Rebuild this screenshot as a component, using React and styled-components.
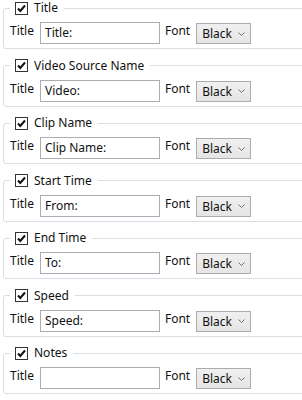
import React from 'react';
import styled, { createGlobalStyle } from 'styled-components';

const GlobalStyle = createGlobalStyle`
  html, body {
    margin: 0;
    padding: 0;
    background: #ffffff;
  }
  body {
    font-family: "Noto Sans", "Open Sans", sans-serif;
    font-size: 12px;
    color: #000;
  }
`;

const Page = styled.div`
  width: 302px;
  height: 400px;
  overflow: hidden;
  padding: 1px 0 0 3px;
  box-sizing: border-box;
`;

const Group = styled.fieldset`
  margin: 0 -30px 9.5px 0;
  padding: 7px 6px 4px 6px;
  border: 1px solid #d5dfe5;
  border-radius: 3px;
  min-width: 0;
`;

const Legend = styled.legend`
  display: flex;
  align-items: center;
  gap: 6px;
  height: 14px;
  padding: 0 6px 0 5px;
  font-size: 12px;
  line-height: 14px;
  color: #111;
`;

const Check = styled.span`
  display: flex;
  width: 13px;
  height: 13px;
`;

const Row = styled.div`
  display: flex;
  align-items: center;
  height: 22px;
`;

const Label = styled.span`
  font-size: 12px;
  line-height: 14px;
  margin-right: ${p => p.$gap}px;
  color: #111;
  position: relative;
  top: -2px;
`;

const TextBox = styled.div`
  width: 120px;
  height: 22px;
  box-sizing: border-box;
  border: 1px solid #abadb3;
  padding: 3px 0 0 4px;
  font-size: 12px;
  line-height: 14px;
  color: #111;
  margin-right: 5px;
`;

const Combo = styled.div`
  display: flex;
  align-items: center;
  justify-content: space-between;
  width: 55px;
  height: 21px;
  margin-top: 1px;
  box-sizing: border-box;
  border: 1px solid #acacac;
  background: linear-gradient(#f0f0f0, #e5e5e5);
  padding: 1px 5px 0 5px;
  font-size: 12px;
  line-height: 14px;
  color: #111;
`;

const CheckBox = () => (
  <Check>
    <svg width="13" height="13" viewBox="0 0 13 13">
      <rect x="0.5" y="0.5" width="12" height="12" fill="#fff" stroke="#333" />
      <path d="M3 6.5 L5.3 9 L10 3.5" fill="none" stroke="#111" strokeWidth="2" />
    </svg>
  </Check>
);

const Chevron = () => (
  <svg width="7" height="5" viewBox="0 0 7 5">
    <path d="M0.5 0.5 L3.5 3.5 L6.5 0.5" fill="none" stroke="#707070" strokeWidth="1" />
  </svg>
);

const fields = [
  { name: 'Title', value: 'Title:' },
  { name: 'Video Source Name', value: 'Video:' },
  { name: 'Clip Name', value: 'Clip Name:' },
  { name: 'Start Time', value: 'From:' },
  { name: 'End Time', value: 'To:' },
  { name: 'Speed', value: 'Speed:' },
  { name: 'Notes', value: '' },
];

export default function App() {
  return (
    <Page>
      <GlobalStyle />
      {fields.map(f => (
        <Group key={f.name}>
          <Legend>
            <CheckBox />
            {f.name}
          </Legend>
          <Row>
            <Label $gap={6}>Title</Label>
            <TextBox>{f.value}</TextBox>
            <Label $gap={6}>Font</Label>
            <Combo>
              Black
              <Chevron />
            </Combo>
          </Row>
        </Group>
      ))}
    </Page>
  );
}
